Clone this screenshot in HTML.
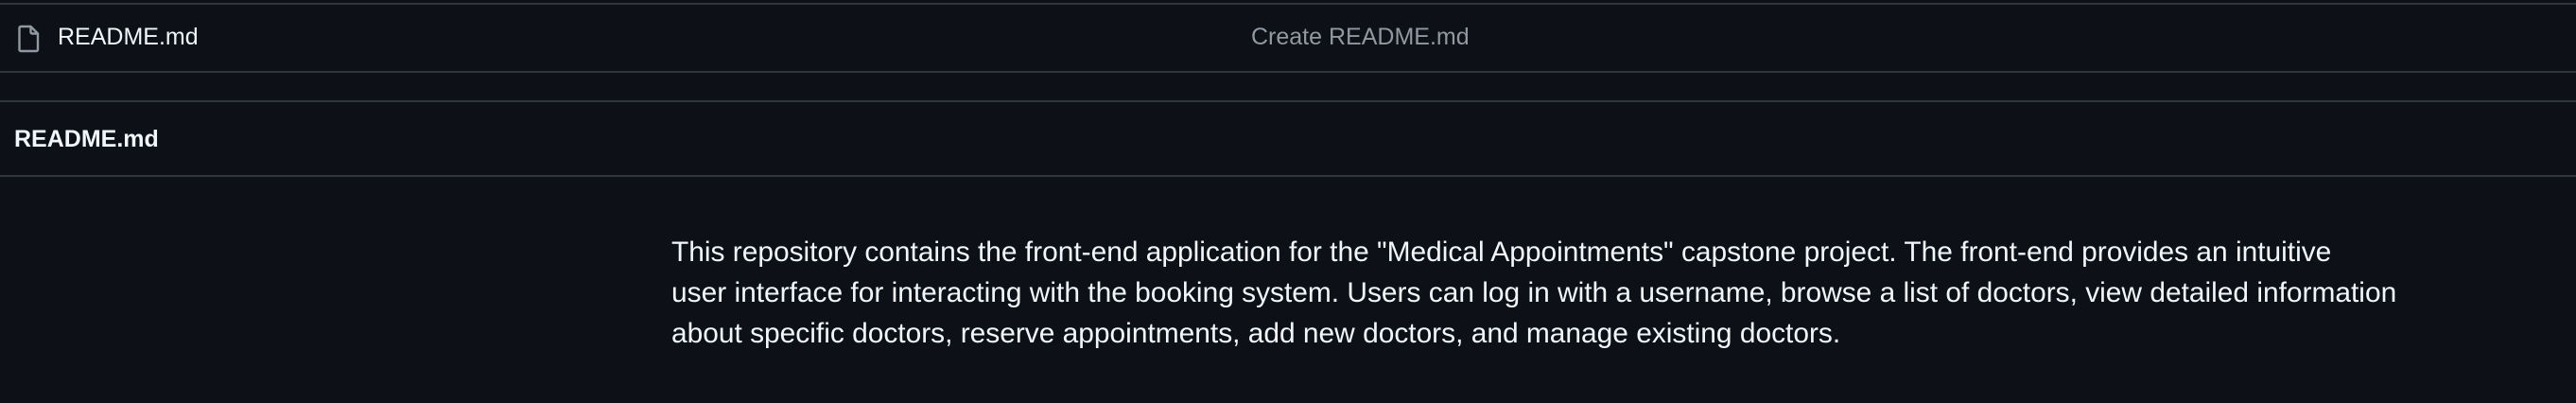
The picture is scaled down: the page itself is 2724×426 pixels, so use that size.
<!DOCTYPE html>
<html><head><meta charset="utf-8"><style>
html,body{margin:0;padding:0;background:#0d1117;width:2724px;height:426px;overflow:hidden;font-family:"Liberation Sans",sans-serif;color:#f0f6fc}
.hr{position:absolute;left:0;width:2724px;height:2px;background:#30363d}
.t{position:absolute;white-space:nowrap}
</style></head><body>
<div class="hr" style="top:3px"></div>
<div class="hr" style="top:75px"></div>
<div class="hr" style="top:106px"></div>
<div class="hr" style="top:185px"></div>
<svg style="position:absolute;left:18px;top:26px" width="25" height="30" viewBox="0 0 25 30"><path d="M2.5 3.5a1.5 1.5 0 0 1 1.5-1.5h10.5l7.5 7.5v17a1.5 1.5 0 0 1-1.5 1.5H4a1.5 1.5 0 0 1-1.5-1.5z M14.5 2v6a1.5 1.5 0 0 0 1.5 1.5h6" fill="none" stroke="#9198a1" stroke-width="2.4" stroke-linejoin="round"/></svg>
<div class="t" style="left:61px;top:24px;font-size:25px;line-height:30px">README.md</div>
<div class="t" style="left:1323px;top:24px;font-size:25px;line-height:30px;color:#9198a1">Create README.md</div>
<div class="t" style="left:15px;top:132px;font-size:25px;line-height:30px;font-weight:bold">README.md</div>
<div class="t" style="left:710px;top:245px;font-size:29.9px;line-height:43px">This repository contains the front-end application for the "Medical Appointments" capstone project. The front-end provides an intuitive<br>user interface for interacting with the booking system. Users can log in with a username, browse a list of doctors, view detailed information<br>about specific doctors, reserve appointments, add new doctors, and manage existing doctors.</div>
</body></html>
